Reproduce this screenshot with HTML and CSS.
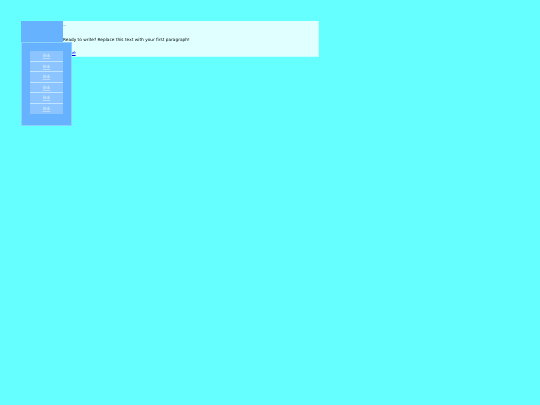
FILE: index.html
```html
<!DOCTYPE html>
<html lang="en">
<head>
    <meta charset="UTF-8">
    <title>Blog</title>
    <link rel="stylesheet" href="styles.css">
</head>
<body>
    <div class="wrapper">
        <div class="post">
            <h2 class="post-title">--</h2>
            <p class="post-text">Ready to write? Replace this text with your first paragraph!</p>
            <a class="post-link" href="#">Home</a>
        </div>
        <div class="sidebar">
            <div class="logo"></div>
            <ul class="menu">
                <li><a href="#">link</a></li>
                <li><a href="#">link</a></li>
                <li><a href="#">link</a></li>
                <li><a href="#">link</a></li>
                <li><a href="#">link</a></li>
                <li><a href="#">link</a></li>
            </ul>
        </div>
    </div>
</body>
</html>
```

FILE: styles.css
```css
* {
    margin: 0;
    padding: 0;
    box-sizing: border-box;
}

body {
    background-color: #66ffff;
    font-family: "DejaVu Sans", sans-serif;
    font-size: 4.27px;
    line-height: 6px;
}

.wrapper {
    display: grid;
    width: 298px;
    margin: 21px 0 0 21px;
}

.post,
.sidebar {
    grid-area: 1 / 1;
}

.post {
    height: 36px;
    padding: 2px 0 0 42px;
    background-color: #e0ffff;
    border-right: 1px solid #c4ffff;
    border-bottom: 1px solid #c4ffff;
}

.post-title {
    height: 14px;
    font-size: 4.27px;
    font-weight: normal;
    color: #666;
}

.post-text {
    height: 13px;
    color: #000;
    filter: blur(0.25px);
}

.post-link {
    display: inline-block;
    color: #0000ee;
    filter: blur(0.35px);
}

.sidebar {
    position: relative;
    width: 51px;
}

.logo {
    width: 42px;
    height: 21px;
    background-color: #66b2ff;
}

.menu {
    height: 84px;
    padding: 8px 8px 0 8px;
    list-style: none;
    background-color: #66b2ff;
    border: 1px solid #8cd0ff;
}

.menu li {
    height: 10.5px;
    line-height: 10px;
    text-align: center;
    background-color: #8cc4ff;
    border-bottom: 1px solid #c0e4ff;
}

.menu li:last-child {
    border-bottom: none;
}

.menu a {
    display: inline-block;
    color: #e6f5ff;
    text-decoration-color: rgba(230, 245, 255, 0.5);
    filter: blur(0.25px);
}
```
